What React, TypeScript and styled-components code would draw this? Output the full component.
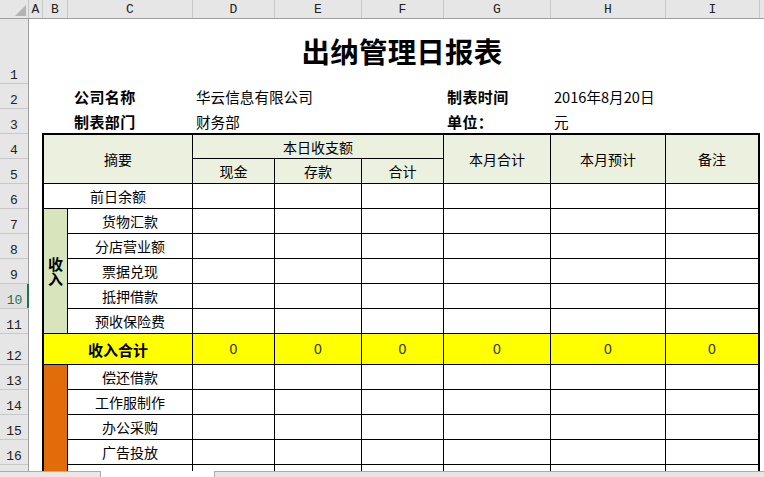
import React from 'react';
import styled, { createGlobalStyle } from 'styled-components';

const GlobalStyle = createGlobalStyle`
  html, body { margin: 0; padding: 0; background: #fff; overflow: hidden; }
  body { font-family: "Noto Sans CJK SC", "Liberation Sans", sans-serif; color: #000; }
  * { box-sizing: border-box; }
`;

const Window = styled.div`
  width: 764px;
  height: 477px;
  display: flex;
  flex-direction: column;
  overflow: hidden;
  background: #fff;
`;

const ColumnHeaderBar = styled.div`
  flex: none;
  display: flex;
  height: 19px;
  background: #e6e6e6;
  border-bottom: 1px solid #9e9e9e;
`;

const Corner = styled.div`
  flex: none;
  width: 29px;
  border-right: 1px solid #c8c8c8;
  display: flex;
  align-items: flex-end;
  justify-content: flex-end;
  padding: 0 2px 2px 0;
`;

const ColLetter = styled.div<{ $w: number }>`
  flex: none;
  width: ${(p) => p.$w}px;
  border-right: 1px solid #c8c8c8;
  display: flex;
  align-items: center;
  justify-content: center;
  font-family: "Liberation Mono", monospace;
  font-size: 13px;
  color: #222;
`;

const HeaderFiller = styled.div`
  flex: 1;
`;

const Body = styled.div`
  flex: 1;
  min-height: 0;
  display: flex;
  overflow: hidden;
`;

const RowHeaders = styled.div`
  flex: none;
  width: 29px;
  background: #e6e6e6;
  border-right: 1px solid #9e9e9e;
  display: flex;
  flex-direction: column;
`;

const RowNum = styled.div<{ $h: number; $active?: boolean }>`
  flex: none;
  height: ${(p) => p.$h}px;
  border-bottom: 1px solid #c8c8c8;
  display: flex;
  align-items: flex-end;
  justify-content: center;
  font-family: "Liberation Mono", monospace;
  font-size: 13px;
  line-height: 13px;
  padding-bottom: 1px;
  color: ${(p) => (p.$active ? '#217346' : '#222')};
  background: ${(p) => (p.$active ? '#e1e1e1' : 'transparent')};
  box-shadow: ${(p) => (p.$active ? 'inset -2px 0 0 #217346' : 'none')};
  margin-right: ${(p) => (p.$active ? '-1px' : '0')};
`;

const SheetArea = styled.div`
  flex: 1;
  display: flex;
  flex-direction: column;
`;

const TitleRow = styled.div`
  flex: none;
  height: 64px;
  margin-left: 13px;
  width: 718px;
  display: flex;
  align-items: center;
  justify-content: center;
  padding-left: 2px;
`;

const Title = styled.h1`
  margin: 0;
  font-size: 28.5px;
  font-weight: 700;
  line-height: 1;
  letter-spacing: 0.2px;
`;

const InfoRow = styled.div`
  flex: none;
  height: 25px;
  display: grid;
  grid-template-columns: 38px 125px 251px 107px 1fr;
  align-items: center;
  padding-top: 1px;
`;

const InfoLabel = styled.div<{ $col: number; $pad: number }>`
  grid-column: ${(p) => p.$col};
  padding-left: ${(p) => p.$pad}px;
  font-size: 15px;
  font-weight: 700;
  letter-spacing: 0.4px;
  white-space: nowrap;
`;

const InfoValue = styled.div<{ $col: number }>`
  grid-column: ${(p) => p.$col};
  padding-left: 4px;
  font-size: 14.6px;
  white-space: nowrap;
`;

const Table = styled.div`
  flex: none;
  margin-left: 13px;
  width: 718px;
  border: 2px solid #000;
  background: #000;
  display: grid;
  grid-template-columns: 23px 124px 81px 86px 81px 106px 114px 92px;
  grid-template-rows: 23px 24px repeat(6, 24px) 30px repeat(5, 24px);
  gap: 1px;
`;

type Tone = 'white' | 'head' | 'green' | 'yellow' | 'orange';
const toneColor: Record<Tone, string> = {
  white: '#ffffff',
  head: '#ebf1de',
  green: '#d8e4bc',
  yellow: '#ffff00',
  orange: '#e26b0a',
};

const Cell = styled.div<{ $cs?: number; $rs?: number; $tone?: Tone; $bold?: boolean; $num?: boolean }>`
  grid-column: span ${(p) => p.$cs ?? 1};
  grid-row: span ${(p) => p.$rs ?? 1};
  background: ${(p) => toneColor[p.$tone ?? 'white']};
  display: flex;
  align-items: center;
  justify-content: center;
  text-align: center;
  font-size: ${(p) => (p.$bold ? '15px' : '14px')};
  font-weight: ${(p) => (p.$bold ? 700 : 400)};
  font-family: ${(p) => (p.$num ? '"Liberation Sans", sans-serif' : 'inherit')};
  color: ${(p) => (p.$num ? '#333' : '#000')};
  white-space: nowrap;
  overflow: hidden;
`;

const VerticalText = styled.span`
  width: 16px;
  white-space: normal;
  word-break: break-all;
  line-height: 15px;
  font-size: 15px;
  font-weight: 700;
`;

const TabBar = styled.div`
  flex: none;
  height: 6px;
  display: flex;
`;

const TabLeft = styled.div`
  width: 101px;
  background: #e8e8e8;
  border-top: 1px solid #acacac;
  border-right: 1px solid #acacac;
`;

const TabActive = styled.div`
  width: 113px;
  background: #ffffff;
`;

const TabRest = styled.div`
  flex: 1;
  background: #e6e6e6;
  border-top: 1px solid #acacac;
  border-left: 1px solid #acacac;
`;

const columns: [string, number][] = [
  ['A', 14], ['B', 25], ['C', 125], ['D', 82], ['E', 87],
  ['F', 82], ['G', 107], ['H', 115], ['I', 94],
];

const rowHeights = [64, 25, 25, 25, 25, 25, 25, 25, 25, 25, 25, 31, 25, 25, 25, 25, 25];

const incomeItems = ['货物汇款', '分店营业额', '票据兑现', '抵押借款', '预收保险费'];
const expenseItems = ['偿还借款', '工作服制作', '办公采购', '广告投放', '交通差旅'];

const EmptyCells = () => (
  <>
    {Array.from({ length: 6 }).map((_, i) => (
      <Cell key={i} />
    ))}
  </>
);

export default function App() {
  return (
    <Window>
      <GlobalStyle />
      <ColumnHeaderBar>
        <Corner>
          <svg width="11" height="11" viewBox="0 0 11 11">
            <polygon points="11,0 11,11 0,11" fill="#b4b4b4" />
          </svg>
        </Corner>
        {columns.map(([l, w]) => (
          <ColLetter key={l} $w={w}>{l}</ColLetter>
        ))}
        <HeaderFiller />
      </ColumnHeaderBar>
      <Body>
        <RowHeaders>
          {rowHeights.map((h, i) => (
            <RowNum key={i} $h={i === 0 ? 65 : h} $active={i === 9}>{i + 1}</RowNum>
          ))}
        </RowHeaders>
        <SheetArea>
          <TitleRow>
            <Title>出纳管理日报表</Title>
          </TitleRow>
          <InfoRow>
            <InfoLabel $col={2} $pad={7}>公司名称</InfoLabel>
            <InfoValue $col={3}>华云信息有限公司</InfoValue>
            <InfoLabel $col={4} $pad={4}>制表时间</InfoLabel>
            <InfoValue $col={5}>2016年8月20日</InfoValue>
          </InfoRow>
          <InfoRow>
            <InfoLabel $col={2} $pad={7}>制表部门</InfoLabel>
            <InfoValue $col={3}>财务部</InfoValue>
            <InfoLabel $col={4} $pad={4}>单位：</InfoLabel>
            <InfoValue $col={5}>元</InfoValue>
          </InfoRow>
          <Table>
            <Cell $cs={2} $rs={2} $tone="head">摘要</Cell>
            <Cell $cs={3} $tone="head">本日收支额</Cell>
            <Cell $rs={2} $tone="head">本月合计</Cell>
            <Cell $rs={2} $tone="head">本月预计</Cell>
            <Cell $rs={2} $tone="head">备注</Cell>
            <Cell $tone="head">现金</Cell>
            <Cell $tone="head">存款</Cell>
            <Cell $tone="head">合计</Cell>

            <Cell $cs={2}>前日余额</Cell>
            <EmptyCells />

            {incomeItems.map((item, i) => (
              <React.Fragment key={item}>
                {i === 0 && (
                  <Cell $rs={5} $tone="green">
                    <VerticalText>收入</VerticalText>
                  </Cell>
                )}
                <Cell>{item}</Cell>
                <EmptyCells />
              </React.Fragment>
            ))}

            <Cell $cs={2} $tone="yellow" $bold>收入合计</Cell>
            {Array.from({ length: 6 }).map((_, i) => (
              <Cell key={i} $tone="yellow" $num>0</Cell>
            ))}

            {expenseItems.map((item, i) => (
              <React.Fragment key={item}>
                {i === 0 && <Cell $rs={5} $tone="orange" />}
                <Cell>{item}</Cell>
                <EmptyCells />
              </React.Fragment>
            ))}
          </Table>
        </SheetArea>
      </Body>
      <TabBar>
        <TabLeft />
        <TabActive />
        <TabRest />
      </TabBar>
    </Window>
  );
}
